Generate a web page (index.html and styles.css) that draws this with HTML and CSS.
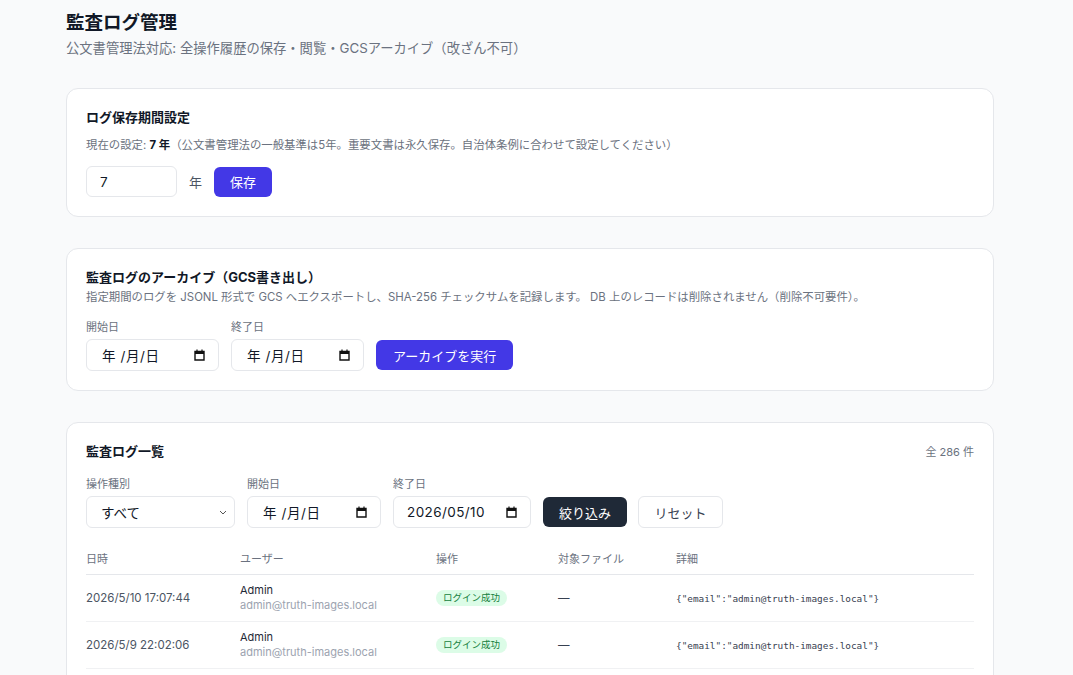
FILE: index.html
```html
<!DOCTYPE html>
<html>

<head>
  <meta charset="utf-8">
  <link rel="stylesheet" href="styles.css">
</head>

<body>
  <div class="page">
    <h1 class="page-title">監査ログ管理</h1>
    <p class="page-sub">公文書管理法対応: 全操作履歴の保存・閲覧・GCSアーカイブ（改ざん不可）</p>

    <!-- 保存期間 -->
    <section class="card">
      <h2 class="card-title">ログ保存期間設定</h2>
      <p class="note note-gap">現在の設定: <b>7 年</b>（公文書管理法の一般基準は5年。重要文書は永久保存。自治体条例に合わせて設定してください）</p>
      <div class="row">
        <div class="field field-num">7</div>
        <span class="unit">年</span>
        <button class="btn btn-primary">保存</button>
      </div>
    </section>

    <!-- アーカイブ -->
    <section class="card">
      <h2 class="card-title">監査ログのアーカイブ（GCS書き出し）</h2>
      <p class="note">指定期間のログを JSONL 形式で GCS へエクスポートし、SHA-256 チェックサムを記録します。 DB 上のレコードは削除されません（削除不可要件）。</p>
      <div class="row row-end filters">
        <div class="group">
          <label class="label">開始日</label>
          <div class="field field-date w133">
            <span>年 /月/日</span>
            <svg class="cal" width="11" height="12" viewBox="0 0 11 12"><path d="M1 2.5h9v8.5H1z" fill="none" stroke="#111" stroke-width="1.4"/><path d="M1 2h9v3H1z" fill="#111"/><path d="M3 0.5v2M8 0.5v2" stroke="#111" stroke-width="1.2"/></svg>
          </div>
        </div>
        <div class="group">
          <label class="label">終了日</label>
          <div class="field field-date w133">
            <span>年 /月/日</span>
            <svg class="cal" width="11" height="12" viewBox="0 0 11 12"><path d="M1 2.5h9v8.5H1z" fill="none" stroke="#111" stroke-width="1.4"/><path d="M1 2h9v3H1z" fill="#111"/><path d="M3 0.5v2M8 0.5v2" stroke="#111" stroke-width="1.2"/></svg>
          </div>
        </div>
        <button class="btn btn-primary btn-wide">アーカイブを実行</button>
      </div>
    </section>

    <!-- 一覧 -->
    <section class="card">
      <div class="card-head">
        <h2 class="card-title">監査ログ一覧</h2>
        <span class="count">全 286 件</span>
      </div>
      <div class="row row-end filters2">
        <div class="group">
          <label class="label">操作種別</label>
          <div class="field field-select">
            <span>すべて</span>
            <svg width="8" height="5" viewBox="0 0 8 5"><path d="M1 1l3 3 3-3" fill="none" stroke="#555" stroke-width="1"/></svg>
          </div>
        </div>
        <div class="group">
          <label class="label">開始日</label>
          <div class="field field-date w134">
            <span>年 /月/日</span>
            <svg class="cal" width="11" height="12" viewBox="0 0 11 12"><path d="M1 2.5h9v8.5H1z" fill="none" stroke="#111" stroke-width="1.4"/><path d="M1 2h9v3H1z" fill="#111"/><path d="M3 0.5v2M8 0.5v2" stroke="#111" stroke-width="1.2"/></svg>
          </div>
        </div>
        <div class="group">
          <label class="label">終了日</label>
          <div class="field field-date field-filled w138">
            <span>2026/05/10</span>
            <svg class="cal" width="11" height="12" viewBox="0 0 11 12"><path d="M1 2.5h9v8.5H1z" fill="none" stroke="#111" stroke-width="1.4"/><path d="M1 2h9v3H1z" fill="#111"/><path d="M3 0.5v2M8 0.5v2" stroke="#111" stroke-width="1.2"/></svg>
          </div>
        </div>
        <button class="btn btn-dark">絞り込み</button>
        <button class="btn btn-ghost">リセット</button>
      </div>

      <div class="table">
        <div class="tr th">
          <div>日時</div>
          <div>ユーザー</div>
          <div>操作</div>
          <div>対象ファイル</div>
          <div>詳細</div>
        </div>
        <div class="tr">
          <div class="date">2026/5/10 17:07:44</div>
          <div><div class="uname">Admin</div><div class="umail">admin@truth-images.local</div></div>
          <div><span class="badge">ログイン成功</span></div>
          <div class="dash">—</div>
          <div class="detail">{"email":"admin@truth-images.local"}</div>
        </div>
        <div class="tr">
          <div class="date">2026/5/9 22:02:06</div>
          <div><div class="uname">Admin</div><div class="umail">admin@truth-images.local</div></div>
          <div><span class="badge">ログイン成功</span></div>
          <div class="dash">—</div>
          <div class="detail">{"email":"admin@truth-images.local"}</div>
        </div>
      </div>
    </section>
  </div>
</body>

</html>
```

FILE: styles.css
```css
body {
  margin: 0;
  background-color: #f9fafb;
  font-family: Inter, "Noto Sans CJK JP", sans-serif;
  color: #111827;
}

.page {
  width: 928px;
  margin-left: 66px;
  padding-top: 10px;
}

.page-title {
  font-size: 18.5px;
  font-weight: 700;
  line-height: 24px;
  margin: 0;
}

.page-sub {
  font-size: 13.3px;
  color: #6b7280;
  line-height: 18px;
  margin: 5px 0 31px;
}

.card {
  background: #fff;
  border: 1px solid #e5e7eb;
  border-radius: 12px;
  padding: 19px;
  margin-bottom: 31px;
}

.card-title {
  font-size: 13px;
  font-weight: 700;
  line-height: 18px;
  margin: 0;
}

.card-head {
  display: flex;
  justify-content: space-between;
  align-items: center;
}

.count {
  font-size: 11px;
  color: #6b7280;
}

/* 説明文 */
.note {
  font-size: 11.4px;
  color: #6b7280;
  line-height: 16px;
  margin: 3px 0 0;
}

.note b {
  color: #111827;
}

.note-gap {
  margin-top: 11px;
}

.row {
  display: flex;
  align-items: center;
  gap: 12px;
  margin-top: 13px;
}

.row-end {
  align-items: flex-end;
}

.filters {
  margin-top: 14px;
}

.filters2 {
  margin-top: 16px;
}

.group {
  display: flex;
  flex-direction: column;
  gap: 4px;
}

.label {
  font-size: 11px;
  color: #6b7280;
  line-height: 16px;
}

.field {
  box-sizing: border-box;
  height: 32px;
  border: 1px solid #e5e7eb;
  border-radius: 6px;
  background: #fff;
  display: flex;
  align-items: center;
  justify-content: space-between;
  padding: 0 13px 0 15px;
  font-size: 13.5px;
  color: #111827;
}

.field-num {
  width: 91px;
  height: 31px;
  padding-left: 13px;
}

.field-date span {
  letter-spacing: 0.6px;
}

.field-filled {
  padding-left: 13px;
}

.field-filled span {
  letter-spacing: 0.4px;
}

.field-select {
  width: 149px;
  padding-left: 14px;
  padding-right: 7px;
}

.w133 { width: 133px; }
.w134 { width: 134px; }
.w138 { width: 138px; }

.unit {
  font-size: 13px;
  color: #4b5563;
}

.btn {
  box-sizing: border-box;
  height: 30px;
  border: none;
  border-radius: 6px;
  padding: 0 16px;
  font-family: inherit;
  font-size: 13px;
  white-space: nowrap;
  cursor: pointer;
}

.btn-primary {
  background-color: #4338e6;
  color: #fff;
}

.btn-wide {
  padding: 0 17px;
  margin-bottom: 1px;
}

.btn-dark {
  background-color: #1f2937;
  color: #fff;
  width: 84px;
  padding: 0;
  margin-bottom: 1px;
}

.btn-ghost {
  background: #fff;
  color: #374151;
  border: 1px solid #e5e7eb;
  height: 32px;
  width: 85px;
  padding: 0;
  margin-left: -1px;
}

/* テーブル */
.table {
  margin-top: 16px;
}

.tr {
  display: grid;
  grid-template-columns: 154px 196px 122px 118px 1fr;
  align-items: center;
  border-bottom: 1px solid #f0f1f3;
  padding: 8px 0;
  font-size: 11.5px;
}

.th {
  color: #6b7280;
  font-size: 11px;
  line-height: 14px;
  border-bottom-color: #e5e7eb;
}

.date {
  color: #4b5563;
}

.uname {
  font-size: 11px;
  line-height: 15px;
  color: #1f2937;
}

.umail {
  font-size: 11px;
  line-height: 15px;
  color: #9ca3af;
}

.badge {
  display: inline-block;
  background: #dcfce7;
  color: #15803d;
  font-size: 9.5px;
  line-height: 16px;
  padding: 0 7px;
  border-radius: 8px;
}

.dash {
  color: #374151;
}

.detail {
  font-family: "DejaVu Sans Mono", monospace;
  font-size: 9.4px;
  color: #374151;
}
```
